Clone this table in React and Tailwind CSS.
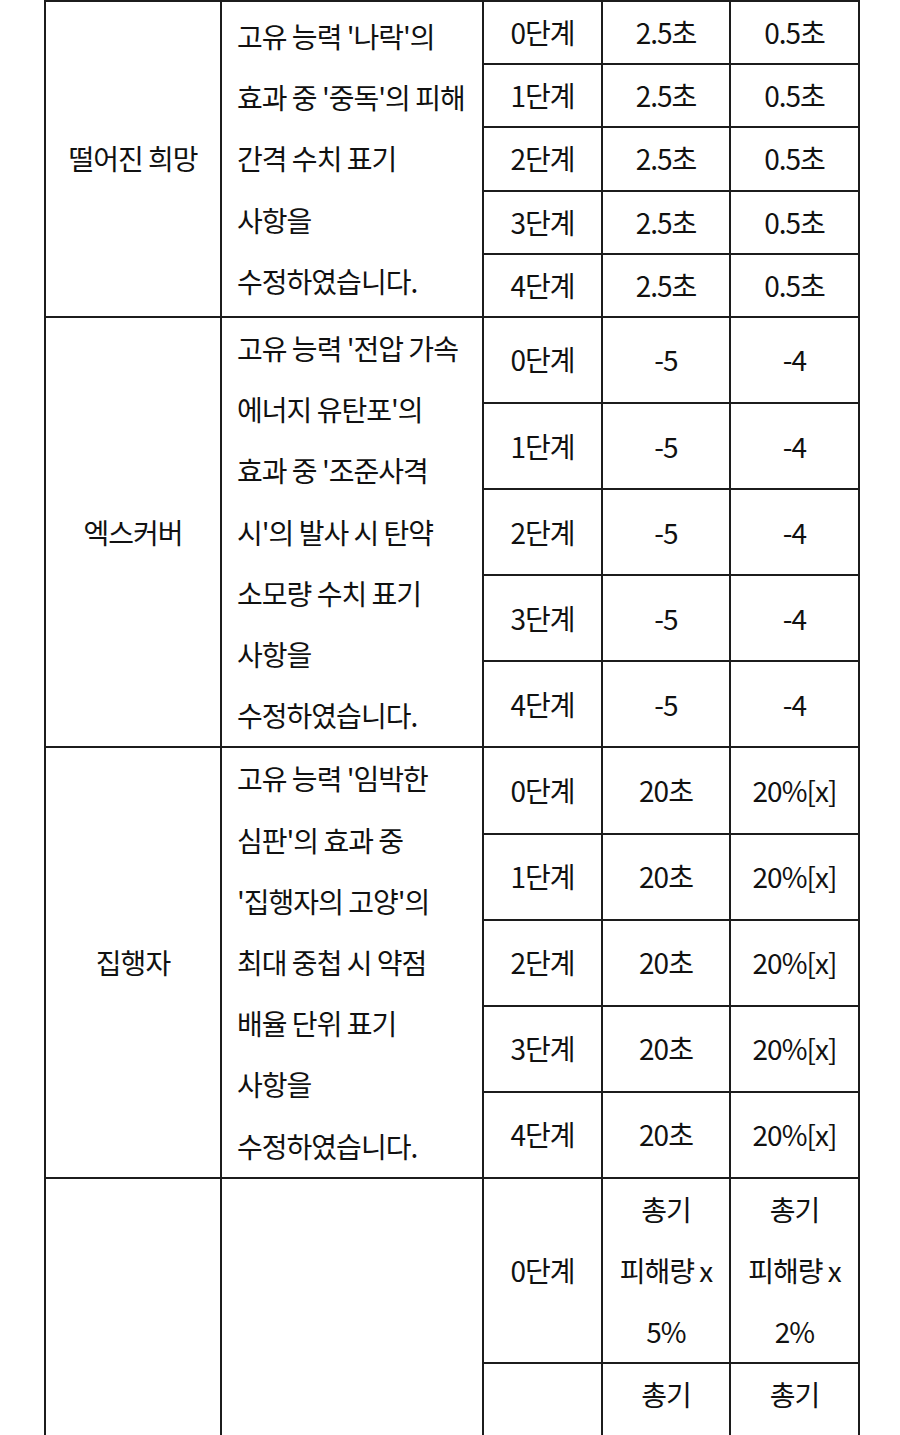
import React from 'react'

const groups = [
  {
    name: '떨어진 희망',
    desc: ["고유 능력 '나락'의", "효과 중 '중독'의 피해", '간격 수치 표기', '사항을', '수정하였습니다.'],
    rowH: 'h-[61px]',
    rows: [0, 1, 2, 3, 4].map((n) => [`${n}단계`, ['2.5초'], ['0.5초']]),
  },
  {
    name: '엑스커버',
    desc: ["고유 능력 '전압 가속", "에너지 유탄포'의", "효과 중 '조준사격", "시'의 발사 시 탄약", '소모량 수치 표기', '사항을', '수정하였습니다.'],
    rowH: 'h-[84px]',
    rows: [0, 1, 2, 3, 4].map((n) => [`${n}단계`, ['-5'], ['-4']]),
  },
  {
    name: '집행자',
    desc: ["고유 능력 '임박한", "심판'의 효과 중", "'집행자의 고양'의", '최대 중첩 시 약점', '배율 단위 표기', '사항을', '수정하였습니다.'],
    rowH: 'h-[84px]',
    rows: [0, 1, 2, 3, 4].map((n) => [`${n}단계`, ['20초'], ['20%[x]']]),
  },
  {
    name: '',
    desc: [],
    rowH: 'h-[184px]',
    rows: [
      ['0단계', ['총기', '피해량 x', '5%'], ['총기', '피해량 x', '2%']],
      ['1단계', ['총기', '피해량 x', '6%'], ['총기', '피해량 x', '3%']],
    ],
  },
]

const cell = 'border-2 border-[#1c1c1c] p-0 align-middle'

function Lines({ items }) {
  return items.map((t, i) => (
    <div key={i} className="whitespace-nowrap">{t}</div>
  ))
}

export default function App() {
  return (
    <div
      className="min-h-screen bg-white text-[#111] text-[28px] leading-[61.2px] tracking-[-0.035em]"
      style={{ fontFamily: '"Noto Sans CJK KR", "Noto Sans", sans-serif' }}
    >
      <table className="ml-[44px] w-[814px] table-fixed border-collapse">
        <colgroup>
          <col className="w-[176px]" />
          <col className="w-[262px]" />
          <col className="w-[119px]" />
          <col className="w-[128px]" />
          <col className="w-[129px]" />
        </colgroup>
        <tbody>
          {groups.map((g, gi) =>
            g.rows.map((r, ri) => (
              <tr key={`${gi}-${ri}`} className={g.rowH}>
                {ri === 0 && (
                  <>
                    <td rowSpan={g.rows.length} className={`${cell} text-center`}>
                      {g.name}
                    </td>
                    <td rowSpan={g.rows.length} className={`${cell} pl-[15px] text-left`}>
                      <Lines items={g.desc} />
                    </td>
                  </>
                )}
                <td className={`${cell} text-center`}>{r[0]}</td>
                <td className={`${cell} text-center`}>
                  <Lines items={r[1]} />
                </td>
                <td className={`${cell} text-center`}>
                  <Lines items={r[2]} />
                </td>
              </tr>
            ))
          )}
        </tbody>
      </table>
    </div>
  )
}
